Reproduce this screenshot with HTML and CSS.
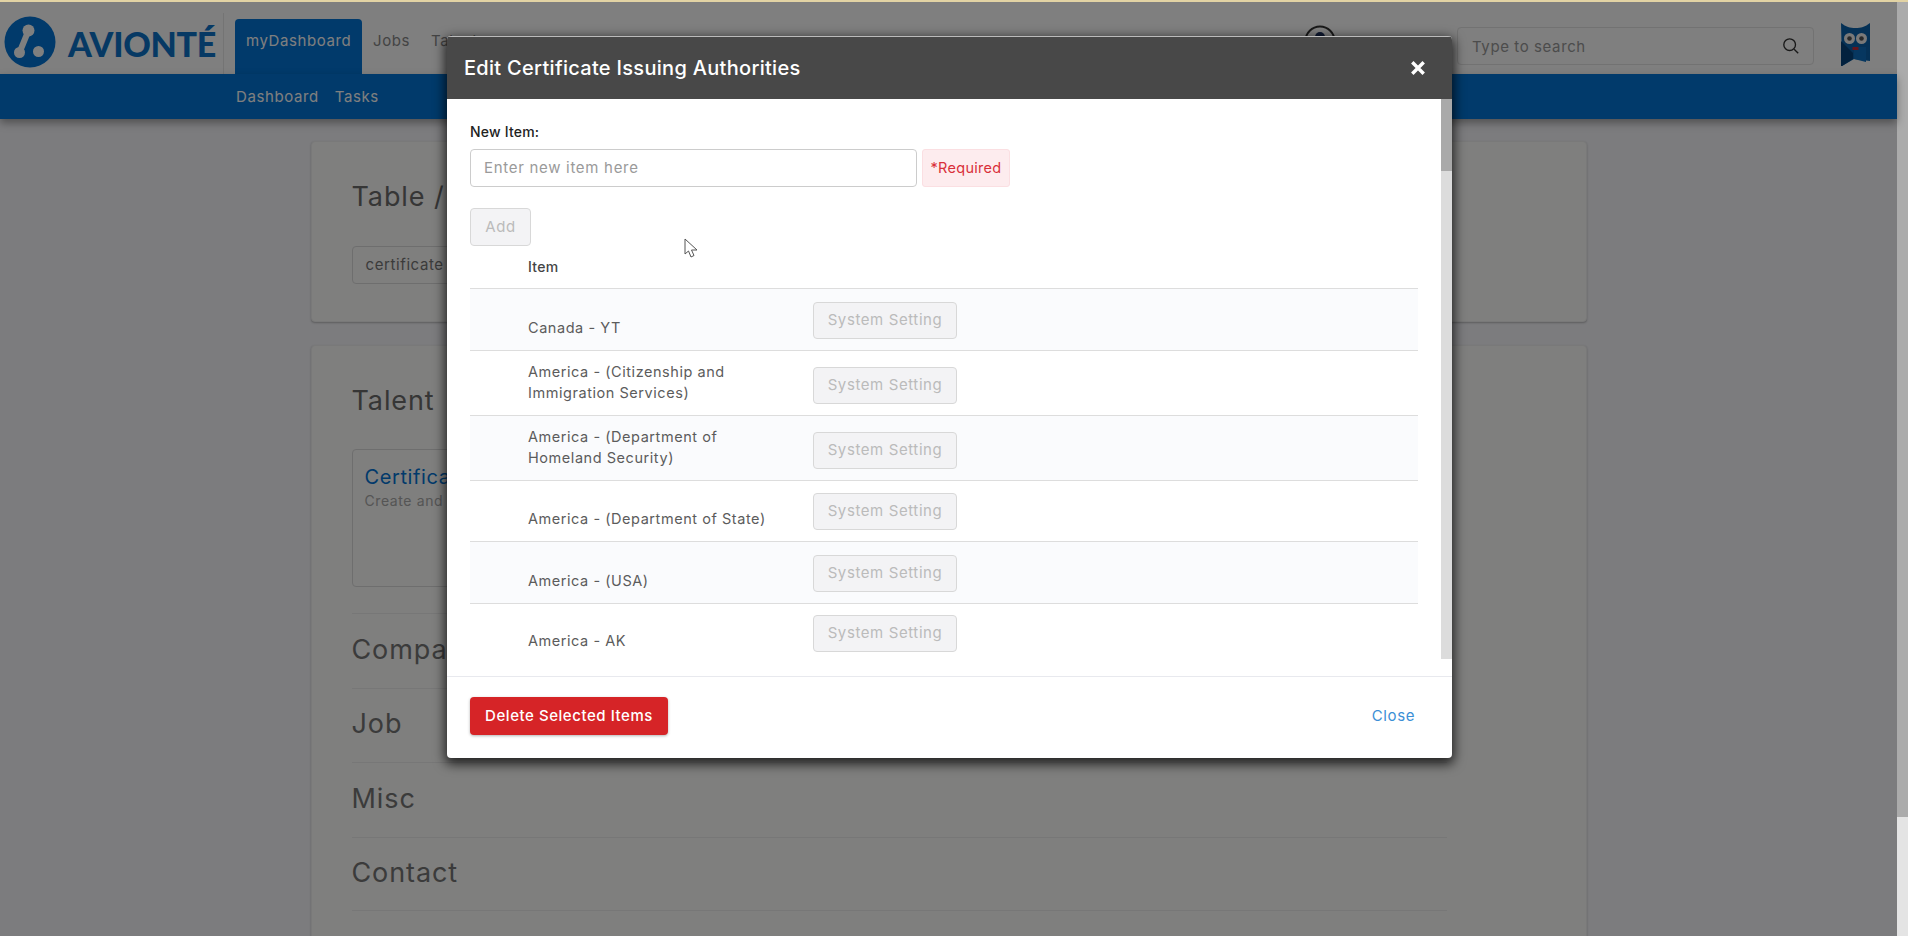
FILE: index.html
```html
<!DOCTYPE html>
<html lang="en">
<head>
    <meta charset="UTF-8">
    <title>Avionté - Edit Certificate Issuing Authorities</title>
    <link rel="stylesheet" href="styles.css">
</head>
<body>
    <div class="topLine"></div>
    <div class="page">
        <div class="pageMain">
            <header class="topbar">
                <a class="logo">
                    <svg class="logoMark" viewBox="0 0 52 52">
                        <circle cx="26" cy="26" r="25.5" fill="#0274d6"/>
                        <path d="M24.5 14.5 L15.5 36.5" stroke="#fff" stroke-width="6" fill="none"/>
                        <circle cx="24.5" cy="14.5" r="6" fill="#fff"/>
                        <circle cx="15.5" cy="36.5" r="5.5" fill="#fff"/>
                        <circle cx="34.5" cy="35.5" r="5.5" fill="#fff"/>
                    </svg>
                    <span class="logoText">AVIONTÉ</span>
                </a>
                <nav class="tabs">
                    <a class="tab tabActive">myDashboard</a>
                    <a class="tab">Jobs</a>
                    <a class="tab">Talent</a>
                </nav>
                <svg class="personIcon" viewBox="0 0 32 32">
                    <circle cx="16" cy="16" r="14.5" fill="none" stroke="#333" stroke-width="2"/>
                    <circle cx="16" cy="12" r="5" fill="#1c3160"/>
                </svg>
                <div class="search">
                    <span>Type to search</span>
                    <svg class="searchIcon" viewBox="0 0 20 20">
                        <circle cx="8.5" cy="8.5" r="6.5" fill="none" stroke="#333" stroke-width="1.5"/>
                        <path d="M13.5 13.5 L18 18" stroke="#333" stroke-width="1.5" fill="none"/>
                    </svg>
                </div>
                <svg class="owl" viewBox="0 0 29 43">
                    <path d="M0 0 C5 4 9 5 14.5 5 C20 5 24 4 29 0 L29 38 L13 36 L1 43 Z" fill="#0a63ad"/>
                    <path d="M0 18 L12 30 L12 36 L1 43 L0 43 Z" fill="#04437d"/>
                    <path d="M13 24 L25 24 L25 39 L13 36 Z" fill="#0d6fc0"/>
                    <circle cx="8.5" cy="15.5" r="5.5" fill="#f2f2f2"/>
                    <circle cx="20.5" cy="15.5" r="5.5" fill="#f2f2f2"/>
                    <circle cx="8.5" cy="15.5" r="2.3" fill="#555"/>
                    <circle cx="20.5" cy="15.5" r="2.3" fill="#555"/>
                    <path d="M11.5 24 L17.5 24 L17.5 27 L11.5 27 Z" fill="#c72a3a"/>
                </svg>
            </header>
            <div class="subbar">
                <a>Dashboard</a>
                <a>Tasks</a>
            </div>

            <section class="card cardSearch">
                <h2 class="cardTitle">Table / List</h2>
                <div class="filterInput">certificate</div>
            </section>

            <section class="card cardList">
                <h2 class="cardTitle">Talent</h2>
                <div class="tableTile">
                    <a class="tileTitle">Certificate Issuing Authorities</a>
                    <p class="tileText">Create and edit the list</p>
                </div>
                <div class="group">Company</div>
                <div class="group">Job</div>
                <div class="group">Misc</div>
                <div class="group">Contact</div>
            </section>
        </div>
        <div class="pageScroll"><div class="pageThumb"></div></div>
    </div>

    <div class="backdrop"></div>

    <div class="modal">
        <div class="modalHeader">
            <span>Edit Certificate Issuing Authorities</span>
            <svg class="closeIcon" viewBox="0 0 14 14">
                <path d="M2 2 L12 12 M12 2 L2 12" stroke="#fff" stroke-width="3" fill="none"/>
            </svg>
        </div>
        <div class="modalBody">
            <div class="modalContent">
                <label class="fieldLabel" for="newItem">New Item:</label>
                <div class="fieldRow">
                    <input class="fieldInput" id="newItem" type="text" placeholder="Enter new item here">
                    <span class="requiredTag">*Required</span>
                </div>
                <button class="btnDisabled btnAdd" disabled>Add</button>
                <div class="itemHead">Item</div>
                <div class="itemRow rowOdd">
                    <span class="itemName">Canada - YT</span>
                    <button class="btnDisabled" disabled>System Setting</button>
                </div>
                <div class="itemRow rowTall">
                    <span class="itemName">America - (Citizenship and Immigration Services)</span>
                    <button class="btnDisabled" disabled>System Setting</button>
                </div>
                <div class="itemRow rowOdd rowTall">
                    <span class="itemName">America - (Department of Homeland Security)</span>
                    <button class="btnDisabled" disabled>System Setting</button>
                </div>
                <div class="itemRow rowShort">
                    <span class="itemName">America - (Department of State)</span>
                    <button class="btnDisabled" disabled>System Setting</button>
                </div>
                <div class="itemRow rowOdd">
                    <span class="itemName">America - (USA)</span>
                    <button class="btnDisabled" disabled>System Setting</button>
                </div>
                <div class="itemRow rowLast">
                    <span class="itemName">America - AK</span>
                    <button class="btnDisabled" disabled>System Setting</button>
                </div>
            </div>
            <div class="modalScroll"><div class="modalThumb"></div></div>
        </div>
        <div class="modalFooter">
            <button class="btnDelete">Delete Selected Items</button>
            <a class="closeLink">Close</a>
        </div>
    </div>

    <svg class="cursor" viewBox="0 0 14 20">
        <path d="M1 1 L1 16 L4.5 13 L7 19 L10 17.5 L7.5 12 L13 12 Z" fill="#fff" stroke="#555" stroke-width="1"/>
    </svg>
</body>
</html>
```

FILE: styles.css
```css
*{
    margin: 0;
    padding: 0;
    box-sizing: border-box;
}
body{
    height: 936px;
    overflow: hidden;
    position: relative;
    font-family: "Inter", "Liberation Sans", sans-serif;
    font-size: 15px;
    letter-spacing: 0.6px;
    background-color: #f8f8fc;
}
.topLine{
    height: 2px;
    background-color: #e2d3a4;
}
.page{
    display: flex;
    height: 934px;
}
.pageMain{
    flex: 1;
    min-width: 0;
}
.pageScroll{
    width: 11px;
    background-color: #e4e4e4;
}
.pageThumb{
    height: 815px;
    background-color: #ababab;
}

/* header */
.topbar{
    display: flex;
    align-items: flex-start;
    height: 72px;
    background-color: #fefefe;
    padding-right: 27px;
}
.logo{
    display: flex;
    align-items: center;
    width: 224px;
    height: 61px;
    margin-top: 11px;
    padding-left: 4px;
    border-right: 1px solid #e8e8e8;
}
.logoMark{
    width: 52px;
    height: 52px;
    margin-top: -3px;
}
.logoText{
    margin-left: 12px;
    font-family: "Lato", sans-serif;
    font-size: 34px;
    font-weight: 900;
    letter-spacing: -0.3px;
    color: #0d73c9;
}
.tabs{
    display: flex;
    margin-left: 11px;
    margin-top: 17px;
}
.tab{
    height: 55px;
    padding: 12px 10px 0;
    line-height: 20px;
    color: #888;
    margin-right: 1px;
}
.tabActive{
    width: 127px;
    padding: 12px 0 0 11px;
    background-color: #0274d6;
    border-radius: 4px 4px 0 0;
    color: #fff;
}
.personIcon{
    width: 32px;
    height: 32px;
    margin-top: 23px;
    margin-left: auto;
    margin-right: 121px;
}
.search{
    display: flex;
    align-items: center;
    justify-content: space-between;
    width: 357px;
    height: 38px;
    margin-top: 25px;
    margin-right: 27px;
    padding: 0 14px;
    border: 1px solid #e4e4e4;
    border-radius: 4px;
    color: #999;
}
.searchIcon{
    width: 18px;
    height: 18px;
    margin-right: -1px;
}
.owl{
    width: 29px;
    height: 43px;
    margin-top: 21px;
}
.subbar{
    display: flex;
    align-items: center;
    gap: 16px;
    height: 45px;
    padding-left: 236px;
    background-color: #0274d6;
    box-shadow: 0 4px 8px rgba(0,0,0,0.35);
    color: #fff;
    position: relative;
}

/* page cards */
.card{
    width: 1276px;
    margin: 22px auto 0;
    padding: 37px 40px 0;
    background-color: #fefefc;
    border: 1px solid #f2f2f2;
    border-radius: 4px;
    box-shadow: 0 1px 2px rgba(0,0,0,0.25);
}
.cardSearch{
    height: 181px;
}
.cardList{
    height: 620px;
    margin-top: 23px;
}
.cardTitle{
    font-size: 27px;
    font-weight: 400;
    letter-spacing: 0.9px;
    line-height: 36px;
    color: #6c6c6c;
}
.filterInput{
    width: 400px;
    height: 38px;
    margin-top: 31px;
    padding: 0 13px;
    border: 1px solid #ddd;
    border-radius: 4px;
    line-height: 36px;
    color: #777;
}
.tableTile{
    width: 400px;
    height: 138px;
    margin-top: 30px;
    margin-bottom: 26px;
    padding: 16px 12px;
    border: 1px solid #ddd;
    border-radius: 4px;
}
.tileTitle{
    display: block;
    font-size: 20px;
    line-height: 22px;
    color: #0274d6;
}
.tileText{
    margin-top: 3px;
    font-size: 14px;
    line-height: 20px;
    color: #aaa;
}
.group{
    display: flex;
    align-items: center;
    width: 1095px;
    height: 74.5px;
    padding-bottom: 3px;
    border-top: 1px solid #eee;
    font-size: 27px;
    letter-spacing: 0.9px;
    color: #777;
}
.group:last-child{
    border-bottom: 1px solid #eee;
}

/* modal */
.backdrop{
    position: absolute;
    top: 2px;
    left: 0;
    right: 11px;
    bottom: 0;
    background-color: rgba(0,0,0,0.5);
}
.modal{
    position: absolute;
    top: 36px;
    left: 447px;
    width: 1005px;
    height: 722px;
    display: flex;
    flex-direction: column;
    background-color: #fff;
    border-radius: 4px;
    overflow: hidden;
    box-shadow: 0 4px 12px 2px rgba(0,0,0,0.75);
}
.modalHeader{
    display: flex;
    align-items: center;
    justify-content: space-between;
    height: 63px;
    padding: 0 26px 0 17px;
    background-color: #484848;
    border-top: 1px solid #bbb;
    color: #fff;
    font-size: 20px;
    font-weight: 500;
    letter-spacing: 0.3px;
}
.closeIcon{
    width: 16px;
    height: 16px;
}
.modalBody{
    display: flex;
    height: 577px;
    align-items: flex-start;
    overflow: hidden;
}
.modalContent{
    flex: 1;
    padding: 23px 23px 0;
}
.modalScroll{
    width: 11px;
    height: 560px;
    background-color: #dcdcdc;
}
.modalThumb{
    height: 72px;
    background-color: #a9a9a9;
}
.fieldLabel{
    display: block;
    font-size: 14px;
    font-weight: 500;
    letter-spacing: 0.2px;
    line-height: 20px;
    color: #222;
}
.fieldRow{
    display: flex;
    gap: 5px;
    margin-top: 7px;
}
.fieldInput{
    width: 447px;
    height: 38px;
    padding: 0 13px 2px;
    border: 1px solid #ccc;
    border-radius: 4px;
    font-family: inherit;
    font-size: 15px;
    letter-spacing: 0.7px;
}
.fieldInput::placeholder{
    color: #9a9a9a;
}
.requiredTag{
    width: 88px;
    height: 38px;
    background-color: #fdecee;
    border: 1px solid #fbdfe2;
    border-radius: 3px;
    line-height: 36px;
    text-align: center;
    font-size: 14.5px;
    letter-spacing: 0.3px;
    color: #d9303a;
}
.btnDisabled{
    width: 144px;
    height: 37px;
    padding-bottom: 2px;
    background-color: #f3f3f5;
    border: 1px solid #d8d8d8;
    border-radius: 4px;
    font-family: inherit;
    font-size: 15px;
    letter-spacing: 0.6px;
    color: #bbb;
}
.btnAdd{
    display: block;
    width: 61px;
    height: 38px;
    margin-top: 21px;
}
.itemHead{
    height: 43px;
    padding: 11px 0 0 58px;
    border-bottom: 1px solid #ddd;
    line-height: 20px;
    font-size: 14px;
    font-weight: 500;
    letter-spacing: 0.3px;
    color: #444;
}
.itemRow{
    display: grid;
    grid-template-columns: 285px 144px;
    align-items: end;
    height: 62px;
    padding: 0 0 11px 58px;
    border-bottom: 1px solid #ddd;
}
.rowOdd{
    background-color: #fafbfd;
}
.rowTall{
    height: 65px;
}
.rowShort{
    height: 61px;
}
.rowLast{
    height: 59px;
    border-bottom: 0;
}
.itemName{
    width: 245px;
    margin-bottom: 1px;
    font-size: 14.5px;
    letter-spacing: 0.55px;
    line-height: 21px;
    color: #5c5c5c;
}
.modalFooter{
    display: flex;
    align-items: center;
    justify-content: space-between;
    flex: 1;
    padding: 0 37px 4px 23px;
    border-top: 1px solid #e8e9ee;
}
.btnDelete{
    width: 198px;
    height: 38px;
    background-color: #d62427;
    border: 0;
    border-radius: 4px;
    box-shadow: 0 1px 3px rgba(0,0,0,0.3);
    font-family: inherit;
    font-size: 15px;
    font-weight: 500;
    letter-spacing: 0.55px;
    color: #fff;
}
.closeLink{
    color: #3b8fd6;
}
.cursor{
    position: absolute;
    top: 238px;
    left: 684px;
    width: 14px;
    height: 20px;
}
```
